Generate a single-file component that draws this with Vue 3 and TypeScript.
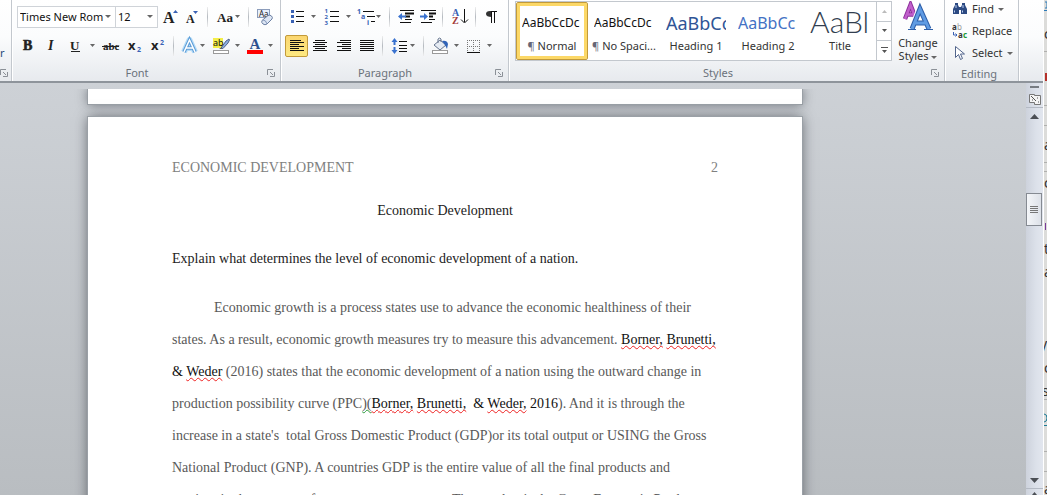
<script setup lang="ts">
interface Run {
  text: string
  kind?: 'ink' | 'spell' | 'grammar'
}

interface StyleTile {
  name: string
  sample: string
  look: string
  mark?: boolean
}

const styles: StyleTile[] = [
  { name: 'Normal', sample: 'AaBbCcDc', look: 'body', mark: true },
  { name: 'No Spaci...', sample: 'AaBbCcDc', look: 'body', mark: true },
  { name: 'Heading 1', sample: 'AaBbCc', look: 'h1' },
  { name: 'Heading 2', sample: 'AaBbCc', look: 'h2' },
  { name: 'Title', sample: 'AaBl', look: 'title' },
]

const lines: Run[][] = [
  [{ text: 'Economic growth is a process states use to advance the economic healthiness of their' }],
  [
    { text: 'states. As a result, economic growth measures try to measure this advancement. ' },
    { text: 'Borner,', kind: 'spell' },
    { text: ' ', kind: 'ink' },
    { text: 'Brunetti,', kind: 'spell' },
  ],
  [
    { text: '& ', kind: 'ink' },
    { text: 'Weder', kind: 'spell' },
    { text: ' (2016) states that the economic development of a nation using the outward change in' },
  ],
  [
    { text: 'production possibility curve (PPC' },
    { text: ')(', kind: 'grammar' },
    { text: 'Borner,', kind: 'spell' },
    { text: ' ', kind: 'ink' },
    { text: 'Brunetti,', kind: 'spell' },
    { text: '  & ', kind: 'ink' },
    { text: 'Weder,', kind: 'spell' },
    { text: ' 2016', kind: 'ink' },
    { text: '). And it is through the' },
  ],
  [{ text: "increase in a state's  total Gross Domestic Product (GDP)or its total output or USING the Gross" }],
  [{ text: 'National Product (GNP). A countries GDP is the entire value of all the final products and' }],
  [{ text: 'services in the economy for a year or one quarter. The number is the Gross Economic Product' }],
]
</script>

<template>
  <div class="screen">
    <div class="word">
      <header class="ribbon">
        <section class="group clipboard">
          <span class="cut">r</span>
          <button class="launcher" aria-label="Clipboard options">
            <svg width="8" height="8"><path d="M.5 6V.5H6M3 3l3 3M7.500 3v4.500H3" /></svg>
          </button>
        </section>

        <section class="group font">
          <div class="row">
            <label class="combo name">
              <select aria-label="Font"><option>Times New Rom</option></select>
            </label>
            <label class="combo size">
              <select aria-label="Font size"><option>12</option></select>
            </label>
            <button aria-label="Grow font">
              <svg width="24" height="22" viewBox="158 6 24 22">
                <text x="163" y="23" class="serif" font-size="16">A</text>
                <path d="M173 13l2.500-3 2.500 3z" fill="#3a62b5" />
              </svg>
            </button>
            <button aria-label="Shrink font">
              <svg width="21" height="22" viewBox="182 6 21 22">
                <text x="186" y="23" class="serif" font-size="12">A</text>
                <path d="M193 11h5l-2.500 3z" fill="#3a62b5" />
              </svg>
            </button>
            <i class="sep"></i>
            <button aria-label="Change case">
              <svg width="32" height="22" viewBox="212 6 32 22">
                <text x="217" y="22" class="serif" font-size="13">Aa</text>
                <path d="M235 15h5l-2.500 3z" class="arrow" />
              </svg>
            </button>
            <i class="sep"></i>
            <button aria-label="Clear formatting">
              <svg width="24" height="22" viewBox="253 6 24 22">
                <rect x="257.500" y="9.500" width="12" height="8" fill="#e9f0fb" stroke="#8c9dbb" />
                <text x="259" y="17" font-size="8" fill="#222" class="sans">Aa</text>
                <path d="M262 20.500l6-5q2-1 3.500.5t.5 3l-5 5q-2 1.500-4 0t-1-3.500z" fill="#dde6f4" stroke="#6d80a3" />
                <path d="M263 20q3 0 4 4" fill="none" stroke="#8497ba" />
              </svg>
            </button>
          </div>
          <div class="row">
            <button aria-label="Bold">
              <svg width="23" height="22" viewBox="17 35 23 22"><text x="23" y="50" class="serif" font-size="14" stroke="#222" stroke-width=".6">B</text></svg>
            </button>
            <button aria-label="Italic">
              <svg width="23" height="22" viewBox="40 35 23 22"><text x="48" y="50" class="serif" font-size="14" font-style="italic">I</text></svg>
            </button>
            <button aria-label="Underline">
              <svg width="36" height="22" viewBox="63 35 36 22">
                <text x="70" y="50" class="serif" font-size="13">U</text>
                <path d="M71 51.500h9" stroke="#222" />
                <path d="M90 44h5l-2.500 3z" class="arrow" />
              </svg>
            </button>
            <button aria-label="Strikethrough">
              <svg width="24" height="22" viewBox="99 35 24 22">
                <text x="103" y="50" class="serif" font-size="11">abc</text>
                <path d="M102 46.500h17" stroke="#222" />
              </svg>
            </button>
            <button aria-label="Subscript">
              <svg width="23" height="22" viewBox="123 35 23 22">
                <text x="128" y="50" class="sans bold" font-size="13">x</text>
                <text x="137" y="52" class="sans bold" font-size="7" fill="#3a62b5">2</text>
              </svg>
            </button>
            <button aria-label="Superscript">
              <svg width="23" height="22" viewBox="146 35 23 22">
                <text x="151" y="50" class="sans bold" font-size="13">x</text>
                <text x="160" y="45" class="sans bold" font-size="7" fill="#3a62b5">2</text>
              </svg>
            </button>
            <i class="sep"></i>
            <button aria-label="Text effects">
              <svg width="31" height="22" viewBox="178 35 31 22">
                <path d="M184 52l5.500-12 5.500 12M186 48h7" fill="none" stroke="#b5dcf8" stroke-width="6" stroke-linejoin="round" />
                <path d="M184 52l5.500-12 5.500 12M186 48h7" fill="none" stroke="#5b9bd6" stroke-width="3.500" />
                <path d="M184 52l5.500-12 5.500 12M186 48h7" fill="none" stroke="#fff" stroke-width="1.500" />
                <path d="M200 44h5l-2.500 3z" class="arrow" />
              </svg>
            </button>
            <button aria-label="Highlight">
              <svg width="34" height="22" viewBox="209 35 34 22">
                <rect x="213" y="38" width="10" height="10" fill="#f4ee4a" />
                <text x="213" y="46" class="sans" font-size="9" fill="#111">ab</text>
                <path d="M221 48l5-7 3-2 .5 1-1.500 3-5 5.500z" fill="#8eaee0" stroke="#35486f" stroke-width=".8" />
                <path d="M219 49l2-1 1 1z" fill="#333" />
                <rect x="213.500" y="50.500" width="15" height="3" fill="#fff" stroke="#9a9a9a" />
                <path d="M235 44h5l-2.500 3z" class="arrow" />
              </svg>
            </button>
            <button aria-label="Font colour">
              <svg width="32" height="22" viewBox="243 35 32 22">
                <text x="249.500" y="49" class="serif bold" font-size="15" fill="#2c4f8f">A</text>
                <path d="M247 50h16v4h-16z" fill="#f00" />
                <path d="M268 44h5l-2.500 3z" class="arrow" />
              </svg>
            </button>
          </div>
          <footer>
            <span>Font</span>
            <button class="launcher" aria-label="Font options">
              <svg width="8" height="8"><path d="M.5 6V.5H6M3 3l3 3M7.500 3v4.500H3" /></svg>
            </button>
          </footer>
        </section>

        <section class="group paragraph">
          <div class="row">
            <button aria-label="Bullets">
              <svg width="34" height="22" viewBox="285 6 34 22">
                <path d="M291 10h3v3h-3zM291 15h3v3h-3zM291 20h3v3h-3z" fill="#3a62b5" />
                <path d="M296 11.500h8M296 16.500h8M296 21.500h8" class="ink" />
                <path d="M311 15h5l-2.500 3z" class="arrow" />
              </svg>
            </button>
            <button aria-label="Numbering">
              <svg width="35" height="22" viewBox="319 6 35 22">
                <g class="sans bold" font-size="6" fill="#3a62b5"><text x="324.500" y="13">1</text><text x="324.500" y="19">2</text><text x="324.500" y="25">3</text></g>
                <path d="M330 11.500h9M330 16.500h9M330 21.500h9" class="ink" />
                <path d="M346 15h5l-2.500 3z" class="arrow" />
              </svg>
            </button>
            <button aria-label="Multilevel list">
              <svg width="31" height="22" viewBox="354 6 31 22">
                <g class="sans bold" font-size="7" fill="#3a62b5"><text x="357" y="14">1</text><text x="361" y="19">a</text><text x="367" y="25">i</text></g>
                <path d="M363 11.500h11M367 16.500h8M371 21.500h4" class="ink" />
                <path d="M376 15h5l-2.500 3z" class="arrow" />
              </svg>
            </button>
            <i class="sep"></i>
            <button aria-label="Decrease indent">
              <svg width="23" height="22" viewBox="394 6 23 22">
                <path d="M400 10.500h14M400 22.500h11M405 19.500h7" class="ink" />
                <path d="M405 13.500h9M405 16.500h5" class="ink heavy" />
                <path d="M398 16.500l4-3.500v2.500h4v2h-4v2.500z" fill="#3a72cf" />
              </svg>
            </button>
            <button aria-label="Increase indent">
              <svg width="21" height="22" viewBox="417 6 21 22">
                <path d="M421 10.500h15M421 22.500h11M429 19.500h6" class="ink" />
                <path d="M429 13.500h7M429 16.500h4" class="ink heavy" />
                <path d="M428 16.500l-4-3.500v2.500h-4v2h4v2.500z" fill="#3a72cf" />
              </svg>
            </button>
            <i class="sep"></i>
            <button aria-label="Sort">
              <svg width="24" height="22" viewBox="447 6 24 22">
                <text x="452" y="16" class="serif bold" font-size="10" fill="#3a62b5">A</text>
                <text x="452" y="24" class="serif bold" font-size="10" fill="#a33a3a">Z</text>
                <path d="M464.500 9v13M461 19.500l3.500 3.500 3.500-3.500" class="ink" />
              </svg>
            </button>
            <i class="sep"></i>
            <button aria-label="Show paragraph marks">
              <svg width="22" height="22" viewBox="482 6 22 22">
                <path d="M499 11.500h-7" class="ink" />
                <path d="M494 11v6q-6 0-6-3t4-3z" fill="#333" />
                <path d="M493.500 11v12M496.500 11v12" class="ink" />
              </svg>
            </button>
          </div>
          <div class="row">
            <button class="on" aria-label="Align left" aria-pressed="true">
              <svg width="21" height="20" viewBox="287 36 21 20"><path d="M291 40.500h11M291 42.500h14M291 44.500h9M291 46.500h14M291 48.500h9M291 50.500h14" class="ink" /></svg>
            </button>
            <button aria-label="Centre">
              <svg width="24" height="22" viewBox="309 35 24 22"><path d="M316 40.500h10M314 42.500h14M316 44.500h10M314 46.500h14M316 48.500h10M314 50.500h14" class="ink" /></svg>
            </button>
            <button aria-label="Align right">
              <svg width="23" height="22" viewBox="333 35 23 22"><path d="M341 40.500h11M338 42.500h14M343 44.500h9M338 46.500h14M343 48.500h9M338 50.500h14" class="ink" /></svg>
            </button>
            <button aria-label="Justify">
              <svg width="23" height="22" viewBox="356 35 23 22"><path d="M361 40.500h14M361 42.500h14M361 44.500h14M361 46.500h14M361 48.500h14M361 50.500h14" class="ink" /></svg>
            </button>
            <i class="sep"></i>
            <button aria-label="Line spacing">
              <svg width="32" height="22" viewBox="388 35 32 22">
                <path d="M395.500 38l3 4h-2v3h-2v-3h-2zM395.500 54l3-4h-2v-3h-2v3h-2z" fill="#3a72cf" />
                <path d="M400 41.500h8M400 45.500h8M400 48.500h8M400 51.500h8" class="ink" />
                <path d="M411 44h5l-2.500 3z" class="arrow" />
              </svg>
            </button>
            <i class="sep"></i>
            <button aria-label="Shading">
              <svg width="34" height="22" viewBox="429 35 34 22">
                <path d="M435 45l6-5 6 5-6 5z" fill="#e5ebf3" stroke="#66758f" />
                <path d="M439 43v-4q2-2 3 0v3" fill="none" stroke="#66758f" />
                <path d="M443 41q5-1 6 3l-1 5-2-4z" fill="#2f63b8" />
                <rect x="433.500" y="50.500" width="15" height="3" fill="#fff" stroke="#9a9a9a" />
                <path d="M455 44h5l-2.500 3z" class="arrow" />
              </svg>
            </button>
            <button aria-label="Borders">
              <svg width="34" height="22" viewBox="463 35 34 22">
                <path d="M468 40.500h13M468 46.500h13M468.500 40v12M474.500 40v12M480.500 40v12" fill="none" stroke="#777" stroke-dasharray="1 1" />
                <path d="M468 52.500h13" class="ink" />
                <path d="M488 44h5l-2.500 3z" class="arrow" />
              </svg>
            </button>
          </div>
          <footer>
            <span>Paragraph</span>
            <button class="launcher" aria-label="Paragraph options">
              <svg width="8" height="8"><path d="M.5 6V.5H6M3 3l3 3M7.500 3v4.500H3" /></svg>
            </button>
          </footer>
        </section>

        <section class="group styles">
          <div class="styles-top">
            <div class="gallery">
              <button v-for="(s, i) in styles" :key="s.name" class="tile" :class="{ chosen: i === 0 }">
                <span class="sample" :class="s.look">{{ s.sample }}</span>
                <span class="tile-name"><em v-if="s.mark">¶ </em>{{ s.name }}</span>
              </button>
              <div class="scroller">
                <button aria-label="Scroll up" class="faint"><svg width="7" height="4"><path d="M1 4l2.500-3L6 4z" /></svg></button>
                <button aria-label="Scroll down"><svg width="7" height="4"><path d="M1 0h5L3.500 3z" /></svg></button>
                <button aria-label="More styles"><svg width="7" height="7"><path d="M0 0h7v1H0zM1 3h5L3.500 6z" /></svg></button>
              </div>
            </div>
            <button class="change">
              <svg width="32" height="32" viewBox="901 1 32 32">
                <path d="M904 19l5.500-14 5.500 14M906 14.500h7" fill="none" stroke="#8d2f9b" stroke-width="4.500" />
                <path d="M904 19l5.500-14 5.500 14M906 14.500h7" fill="none" stroke="#c05fcb" stroke-width="2.500" />
                <path d="M911 29l8-20 9 20M914 23h11" fill="none" stroke="#fff" stroke-width="7" />
                <path d="M911 29l8-20 9 20M914 23h11" fill="none" stroke="#2e5fa9" stroke-width="5" />
                <path d="M911 29l8-20 9 20M914 23h11" fill="none" stroke="#5f9be3" stroke-width="3" />
                <path d="M907 29.500h8M923 29.500h9" stroke="#2e5fa9" />
              </svg>
              <span>Change</span>
              <span>Styles <i class="caret"></i></span>
            </button>
          </div>
          <footer>
            <span>Styles</span>
            <button class="launcher" aria-label="Styles options">
              <svg width="8" height="8"><path d="M.5 6V.5H6M3 3l3 3M7.500 3v4.500H3" /></svg>
            </button>
          </footer>
        </section>

        <section class="group editing">
          <div class="edits">
            <button>
              <svg width="16" height="16">
                <path d="M3 2h3v2l1 2v7H1V8l2-4zM10 2h3v2l2 4v5H9V6l1-2z" fill="#2c4a82" />
                <path d="M6 6h4v3H6z" fill="#2c4a82" />
                <path d="M2.500 9.500v2M4 4v3M11 4v3M10.500 9.500v2" stroke="#b9cdf0" />
              </svg>
              <span>Find</span><i class="caret"></i>
            </button>
            <button>
              <svg width="16" height="16">
                <text x="0" y="7" font-size="8" class="sans bold" fill="#333">a</text>
                <text x="5" y="7" font-size="8" class="sans" fill="#999">b</text>
                <text x="6" y="15" font-size="8" class="sans bold" fill="#333">a</text>
                <text x="11" y="15" font-size="8" class="sans bold" fill="#1d9a33">c</text>
                <path d="M1.500 9v3H5M3.500 10.500L5 12l-1.500 1.500" fill="none" stroke="#3a62b5" />
              </svg>
              <span>Replace</span>
            </button>
            <button>
              <svg width="16" height="16"><path d="M3.500 1.500v11l3-3 2 5 2-1-2-4.500h4z" fill="#fff" stroke="#52658c" /></svg>
              <span>Select</span><i class="caret"></i>
            </button>
          </div>
          <footer><span>Editing</span></footer>
        </section>
      </header>

      <div class="workspace">
        <main class="canvas">
          <div class="viewport">
            <div class="sheet previous"></div>
            <article class="sheet">
              <div class="running"><span>ECONOMIC DEVELOPMENT</span><span>2</span></div>
              <h1>Economic Development</h1>
              <p class="question">Explain what determines the level of economic development of a nation.</p>
              <p class="body-text">
                <span v-for="(line, i) in lines" :key="i" class="line"><span v-for="(run, j) in line" :key="j" :class="run.kind">{{ run.text }}</span></span>
              </p>
            </article>
          </div>
        </main>
        <aside class="scrollbar">
          <button class="split" aria-label="Show ruler">
            <svg width="14" height="22">
              <path d="M2 2h9v2H2z" fill="#777c82" />
              <path d="M1.500 10.500h5v1h6v9h-6v-2h-5z" fill="#f4f4f4" stroke="#777" />
              <path d="M3 12l5 5M9 14h1M4 16h1M10 18h1" stroke="#555" />
            </svg>
          </button>
          <button class="arrow-up" aria-label="Scroll up"><svg width="9" height="5"><path d="M0 5l4.500-5L9 5z" /></svg></button>
          <div class="track">
            <div class="thumb"><i></i><i></i><i></i><i></i></div>
          </div>
          <button class="arrow-down" aria-label="Scroll down"><svg width="9" height="5"><path d="M0 0h9L4.500 5z" /></svg></button>
          <button class="prev" aria-label="Previous page"><svg width="5" height="3"><path d="M0 3l2.500-3L5 3z" /></svg></button>
        </aside>
      </div>
    </div>

    <svg class="behind" width="4" height="495" aria-hidden="true">
      <path d="M0 51.500h4M0 105.500h4M0 125.500h4M0 162.500h4M0 171.500h4M0 399.500h4M0 451.500h4M0 471.500h4" stroke="#b0b0ae" />
      <g class="sans" font-size="14" fill="#333">
        <text x="0" y="39">c</text><text x="0" y="150">a</text><text x="0" y="188">c</text>
        <text x="0" y="254">t</text><text x="0" y="277">a</text><text x="-4" y="349">y</text>
        <text x="0" y="373">c</text><text x="-2" y="396">s</text><text x="0" y="494">a</text>
      </g>
      <path d="M1 2h2v6H1M0 10.500h4" fill="none" stroke="#2a7ab8" />
      <path d="M1 73h2v8H1z" fill="#b5302a" />
      <path d="M1 223h1v7H1z" fill="#7b3a9a" />
      <path d="M0 414q3 0 3 4t-3 4M0 425.500h4" fill="none" stroke="#1c7a96" />
    </svg>
  </div>
</template>

<style>
html,
body {
  margin: 0;
  overflow: hidden;
}
</style>

<style scoped>
.screen {
  display: flex;
  height: 100vh;
  overflow: hidden;
  font: 11px/14px 'Noto Sans', 'Open Sans', sans-serif;
  color: #333;
  background: #dcdcda;
}
.word {
  flex: 1;
  min-width: 0;
  display: flex;
  flex-direction: column;
}
.behind {
  flex: none;
  background: #dcdcda;
  border-left: 1px solid #fff;
  box-sizing: border-box;
}
button {
  border: 0;
  padding: 0;
  margin: 0;
  background: none;
  font: inherit;
  color: inherit;
  display: flex;
  align-items: center;
}
svg {
  display: block;
  flex: none;
}
.serif {
  font-family: 'Liberation Serif', serif;
  font-weight: 700;
}
.sans {
  font-family: 'Noto Sans', sans-serif;
}
.bold {
  font-weight: 700;
}
.row text:not([fill]) {
  fill: #222;
}
.row g text:not([fill]) {
  fill: inherit;
}
.arrow {
  fill: #666;
}
.ink {
  fill: none;
  stroke: #111;
}
.heavy {
  stroke-width: 2;
}

/* Ribbon */
.ribbon {
  flex: none;
  display: flex;
  height: 81px;
  background: linear-gradient(#fff, #fbfcfd 45%, #e7eaee);
  border-bottom: 2px solid #8e949b;
  box-sizing: content-box;
}
.group {
  display: flex;
  flex-direction: column;
  box-sizing: border-box;
  border-right: 1px solid #c3c8ce;
  box-shadow: 1px 0 #fff;
  padding-top: 6px;
}
.clipboard {
  width: 12px;
  padding-top: 46px;
  justify-content: space-between;
}
.cut {
  color: #2a4a7a;
}
.font {
  width: 269px;
  padding-left: 5px;
}
.paragraph {
  width: 228px;
  padding-left: 4px;
}
.styles {
  width: 436px;
  padding: 1px 0 0 6px;
}
.editing {
  width: 74px;
  padding-top: 0;
}
.row {
  display: flex;
  height: 22px;
  margin-bottom: 7px;
}
.sep {
  width: 1px;
  height: 20px;
  margin: 1px 4px;
  background: linear-gradient(#eee, #b5bac0, #eee);
}
.combo {
  position: relative;
  box-sizing: border-box;
  height: 22px;
  border: 1px solid #cfd3d8;
  background: #fff;
}
.combo::after {
  content: '';
  position: absolute;
  right: 4px;
  top: 8px;
  border: 3px solid transparent;
  border-top-color: #666;
  border-bottom: 0;
}
.name {
  width: 99px;
}
.size {
  width: 42px;
  border-left: 0;
}
select {
  appearance: none;
  width: 100%;
  height: 20px;
  border: 0;
  padding: 0 0 0 2px;
  background: none;
  font: inherit;
  color: #111;
}
.on {
  border: 1px solid #c29a3a;
  border-radius: 2px;
  background: linear-gradient(#fbd670, #fde981);
}
footer {
  display: flex;
  align-items: center;
  margin-top: auto;
  height: 17px;
  color: #6b727b;
  padding-right: 5px;
}
footer span {
  flex: 1;
  text-align: center;
}
footer span:not(:last-child) {
  padding-right: 10px;
}
.launcher {
  align-self: center;
}
.launcher path {
  fill: none;
  stroke: #8b9097;
}
.clipboard .launcher {
  margin: 0 4px 4px auto;
}
.styles-top {
  display: flex;
}
.gallery {
  display: flex;
  box-sizing: border-box;
  width: 377px;
  height: 60px;
  border: 1px solid #c3c8ce;
  background: #fff;
}
.tile {
  flex: 1;
  min-width: 0;
  box-sizing: border-box;
  flex-direction: column;
  padding: 5px 6px;
}
.chosen {
  border: 1px solid #c29a3a;
  border-radius: 2px;
  box-shadow: inset 0 0 0 3px #fcd867;
  padding: 4px 5px;
}
.sample {
  width: 60px;
  height: 32px;
  line-height: 32px;
  overflow: hidden;
  white-space: nowrap;
  text-align: left;
  color: #111;
  font-size: 12px;
}
.h1 {
  font-size: 18px;
  color: #2f5496;
}
.h2 {
  font-size: 16px;
  color: #4472c4;
}
.title {
  font-family: Lato, sans-serif;
  font-weight: 300;
  font-size: 30px;
  line-height: 28px;
  color: #323e4f;
}
.tile-name {
  white-space: nowrap;
}
.tile-name em {
  font-style: normal;
  color: #667;
}
.scroller {
  width: 14px;
  display: flex;
  flex-direction: column;
  border-left: 1px solid #c3c8ce;
}
.scroller button {
  flex: 1;
  justify-content: center;
  fill: #555;
}
.scroller button + button {
  border-top: 1px solid #c3c8ce;
}
.scroller .faint {
  fill: #bbb;
}
.change {
  flex: 1;
  flex-direction: column;
  line-height: 13px;
}
.change svg {
  margin-bottom: 3px;
}
.caret {
  display: inline-block;
  vertical-align: middle;
  border: 3px solid transparent;
  border-top-color: #666;
  border-bottom: 0;
}
.edits {
  display: flex;
  flex-direction: column;
}
.edits button {
  height: 22px;
  padding: 0 0 4px 7px;
  gap: 4px;
  box-sizing: border-box;
}

/* Document area */
.workspace {
  flex: 1;
  min-height: 0;
  display: flex;
}
.canvas {
  flex: 1;
  min-width: 0;
  display: flex;
  flex-direction: column;
  padding-top: 6px;
  background: linear-gradient(#cdd1d6, #b9bdc1);
}
.viewport {
  flex: 1;
  min-height: 0;
  overflow: hidden;
}
.sheet {
  max-width: 714px;
  margin: 0 24px 0 88px;
  box-sizing: border-box;
  padding: 41px 84px 0;
  background: #fff;
  box-shadow: 0 0 0 1px #9aa0a6, 0 0 12px rgba(40, 45, 52, 0.65);
  font: 14px/32px 'Liberation Serif', 'Times New Roman', serif;
  height: 900px;
}
.previous {
  height: 15px;
  padding: 0;
  margin-bottom: 13px;
}
.running {
  display: flex;
  justify-content: space-between;
  line-height: 20px;
  margin-bottom: 17px;
  color: #808080;
}
h1 {
  margin: 0;
  font: inherit;
  text-align: center;
  color: #222;
}
p {
  margin: 16px 0 0;
}
.question {
  color: #222;
}
.body-text {
  margin-top: 17px;
  color: #595959;
}
.line {
  display: block;
  white-space: pre;
}
.line:first-child {
  padding-left: 42px;
}
.ink,
.spell {
  color: #111;
}
.spell,
.grammar {
  text-decoration: underline wavy #e22 1px;
  text-decoration-skip-ink: none;
  text-underline-offset: 1px;
}
.grammar {
  text-decoration-color: #2a9a3a;
}

/* Scroll bar */
.scrollbar {
  width: 17px;
  display: flex;
  flex-direction: column;
  background: linear-gradient(90deg, #cdd2dc, #dce1ea 60%, #e2e6ee);
  fill: #4b4f55;
}
.scrollbar button {
  justify-content: center;
}
.split {
  height: 25px;
  border-bottom: 1px solid #b4bac4;
}
.arrow-up,
.arrow-down {
  height: 16px;
}
.track {
  flex: 1;
  display: flex;
  flex-direction: column;
}
.track::before {
  content: '';
  flex: 69;
}
.track::after {
  content: '';
  flex: 246;
}
.thumb {
  height: 33px;
  width: 16px;
  box-sizing: border-box;
  border: 1px solid #858a92;
  background: linear-gradient(90deg, #f4f6f9, #dde1e8);
  display: flex;
  flex-direction: column;
  align-items: center;
  justify-content: center;
  gap: 1px;
}
.thumb i {
  width: 8px;
  height: 1px;
  background: #777;
}
.prev {
  height: 7px;
  flex: none;
  border-top: 1px solid #b4bac4;
  align-items: flex-end;
}
</style>
